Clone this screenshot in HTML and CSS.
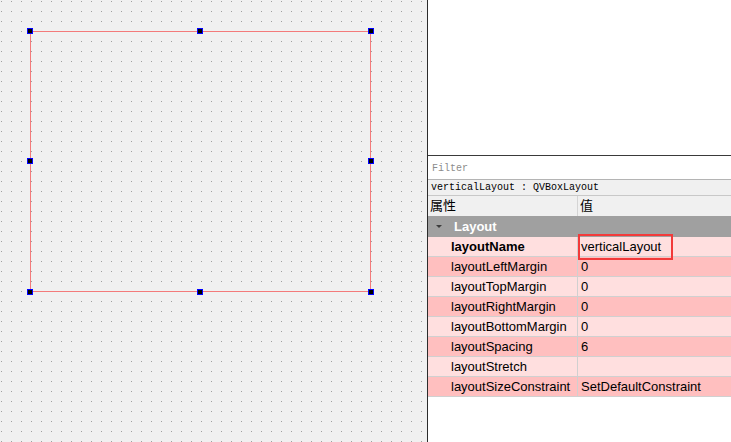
FILE: index.html
```html
<!DOCTYPE html>
<html>
<head>
<meta charset="utf-8">
<link rel="stylesheet" href="styles.css">
</head>
<body>
<div class="app">
  <div class="canvas">
    <div class="frame"></div>
    <span class="handle h-tl"></span>
    <span class="handle h-tm"></span>
    <span class="handle h-tr"></span>
    <span class="handle h-ml"></span>
    <span class="handle h-mr"></span>
    <span class="handle h-bl"></span>
    <span class="handle h-bm"></span>
    <span class="handle h-br"></span>
  </div>
  <div class="panel">
    <div class="top-area"></div>
    <div class="filter">Filter</div>
    <div class="objname">verticalLayout : QVBoxLayout</div>
    <div class="header">
      <div class="hcell hname">属性</div>
      <div class="hcell hval">值</div>
    </div>
    <div class="group"><span class="tri"></span><span class="group-label">Layout</span></div>
    <div class="props">
      <div class="row light"><div class="pname bold">layoutName</div><div class="pval">verticalLayout</div></div>
      <div class="row dark"><div class="pname">layoutLeftMargin</div><div class="pval">0</div></div>
      <div class="row light"><div class="pname">layoutTopMargin</div><div class="pval">0</div></div>
      <div class="row dark"><div class="pname">layoutRightMargin</div><div class="pval">0</div></div>
      <div class="row light"><div class="pname">layoutBottomMargin</div><div class="pval">0</div></div>
      <div class="row dark"><div class="pname">layoutSpacing</div><div class="pval">6</div></div>
      <div class="row light"><div class="pname">layoutStretch</div><div class="pval"></div></div>
      <div class="row dark"><div class="pname">layoutSizeConstraint</div><div class="pval">SetDefaultConstraint</div></div>
      <div class="highlight"></div>
    </div>
    <div class="rest"></div>
  </div>
</div>
</body>
</html>
```

FILE: styles.css
```css
html, body {
  margin: 0;
  padding: 0;
  background: #ffffff;
}

.app {
  display: flex;
  width: 731px;
  height: 442px;
  overflow: hidden;
  font-family: "Liberation Sans", "Noto Sans CJK SC", sans-serif;
  font-size: 13px;
  color: #000;
}

.canvas {
  position: relative;
  width: 427px;
  flex: none;
  background-color: #a0a0a0;
  background-image:
    linear-gradient(to right, transparent 1px, #f0f0f0 1px),
    linear-gradient(to bottom, transparent 1px, #f0f0f0 1px);
  background-size: 10px 10px;
  background-position: 1px 1px;
}

.frame {
  position: absolute;
  left: 30px;
  top: 31px;
  width: 339px;
  height: 259px;
  border: 1px solid #f37a7a;
}

.handle {
  position: absolute;
  width: 4px;
  height: 4px;
  background: #000;
  border: 1px solid #0000ff;
}
.h-tl { left: 27px; top: 28px; }
.h-tm { left: 197px; top: 28px; }
.h-tr { left: 368px; top: 28px; }
.h-ml { left: 27px; top: 158px; }
.h-mr { left: 368px; top: 158px; }
.h-bl { left: 27px; top: 289px; }
.h-bm { left: 197px; top: 289px; }
.h-br { left: 368px; top: 289px; }

.panel {
  flex: 1;
  display: flex;
  flex-direction: column;
  border-left: 1px solid #2b2b2b;
  background: #fff;
}

.top-area {
  height: 155px;
  flex: none;
}

.filter {
  height: 23px;
  flex: none;
  border-top: 1px solid #3a3a3a;
  border-bottom: 1px solid #b4b4b4;
  padding-left: 4px;
  font-family: "Liberation Mono", "DejaVu Sans Mono", monospace;
  font-size: 10px;
  line-height: 25px;
  color: #8c8c8c;
}

.objname {
  height: 15px;
  flex: none;
  background: #f0f0f0;
  border-bottom: 1px solid #c8c8c8;
  padding-left: 3px;
  font-family: "Liberation Mono", "DejaVu Sans Mono", monospace;
  font-size: 10px;
  line-height: 16px;
}

.header {
  display: flex;
  height: 20px;
  flex: none;
  background: #f0f0f0;
  line-height: 20px;
}
.hcell {
  padding-left: 2px;
}
.hname {
  width: 147px;
}
.hval {
  flex: 1;
  border-left: 1px solid #d4d4d4;
}

.group {
  display: flex;
  align-items: center;
  height: 21px;
  flex: none;
  background: #a0a0a0;
}
.tri {
  width: 0;
  height: 0;
  margin-left: 8px;
  border-left: 3px solid transparent;
  border-right: 3px solid transparent;
  border-top: 3px solid #3c3c3c;
}
.group-label {
  margin-left: 12px;
  color: #fff;
  font-weight: bold;
}

.props {
  position: relative;
  flex: none;
}

.row {
  display: flex;
  height: 19px;
  border-bottom: 1px solid #d0d0d0;
  line-height: 20px;
}
.row.light { background: #ffdfdf; }
.row.dark { background: #ffbfbf; }

.pname {
  width: 126px;
  padding-left: 23px;
  border-right: 1px solid #d0d0d0;
  white-space: nowrap;
}
.pname.bold { font-weight: bold; }
.pval {
  flex: 1;
  padding-left: 3px;
  white-space: nowrap;
}

.highlight {
  position: absolute;
  left: 150px;
  top: -3px;
  width: 91px;
  height: 22px;
  border: 2px solid #f23a3a;
}

.rest {
  flex: 1;
  background: #fff;
}
```
